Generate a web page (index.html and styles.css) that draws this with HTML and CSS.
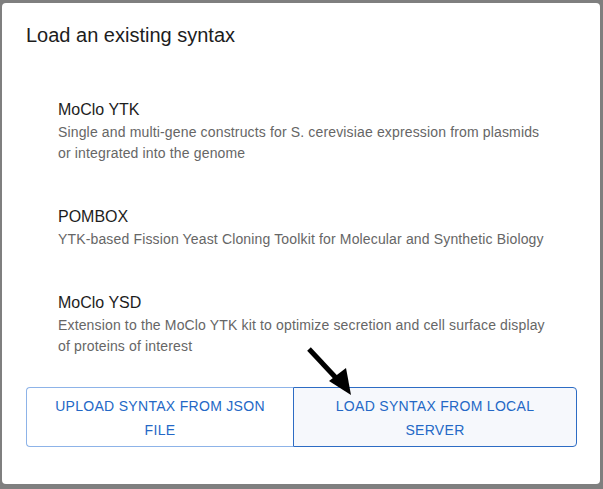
FILE: index.html
```html
<!DOCTYPE html>
<html lang="en">

<head>

    <meta charset="UTF-8">
    <meta name="viewport" content="width=device-width, initial-scale=1.0">
    <title>Load syntax</title>

    <link rel="stylesheet" href="styles.css">

</head>

<body>

    <div class="dialog">

        <h2 class="dialog-title">Load an existing syntax</h2>

        <ul class="syntax-list">

            <li class="syntax-item">
                <div class="syntax-name">MoClo YTK</div>
                <div class="syntax-desc">Single and multi-gene constructs for S. cerevisiae expression from plasmids or integrated into the genome</div>
            </li>

            <li class="syntax-item">
                <div class="syntax-name">POMBOX</div>
                <div class="syntax-desc">YTK-based Fission Yeast Cloning Toolkit for Molecular and Synthetic Biology</div>
            </li>

            <li class="syntax-item">
                <div class="syntax-name">MoClo YSD</div>
                <div class="syntax-desc">Extension to the MoClo YTK kit to optimize secretion and cell surface display of proteins of interest</div>
            </li>

        </ul>

        <div class="button-group">
            <button class="btn-upload">Upload syntax from JSON file</button>
            <button class="btn-local">Load syntax from local server</button>

            <svg class="arrow" width="50" height="52" viewBox="0 0 50 52">
                <line x1="2" y1="2" x2="30" y2="32" stroke="#000" stroke-width="5" />
                <polygon points="22,34 39,21 44,48" fill="#000" />
            </svg>
        </div>

    </div>

</body>

</html>
```

FILE: styles.css
```css
body {
    margin: 0;
    background-color: #7f7f7f;
    font-family: "Liberation Sans", Arial, sans-serif;
    width: 603px;
    height: 489px;
    overflow: hidden;
}

.dialog {
    margin: 3px 0 0 2px;
    width: 598px;
    height: 481px;
    background-color: #fff;
    border-radius: 4px;
    box-sizing: border-box;
    padding: 16px 23px 0 24px;
}

.dialog-title {
    margin: 0;
    font-size: 20px;
    font-weight: normal;
    line-height: 32px;
    color: #1d1d1d;
}

.syntax-list {
    list-style: none;
    margin: 0;
    padding: 26px 0 0 32px;
}

.syntax-item {
    padding: 21px 0 20px 0;
}

.syntax-name {
    font-size: 16px;
    line-height: 24px;
    color: #1d1d1d;
}

.syntax-desc {
    font-size: 14px;
    line-height: 21px;
    letter-spacing: 0.15px;
    color: #666;
    width: 490px;
}

.button-group {
    position: relative;
    display: flex;
    margin-top: 10px;
}

.button-group button {
    height: 60px;
    padding: 6px 20px;
    font-family: "Liberation Sans", Arial, sans-serif;
    font-size: 14px;
    line-height: 24px;
    letter-spacing: 0.3px;
    text-transform: uppercase;
    color: #2468c6;
    background-color: #fff;
    cursor: pointer;
}

.btn-upload {
    width: 267px;
    border: 1px solid #8db3e8;
    border-right: none;
    border-radius: 4px 0 0 4px;
}

.btn-local {
    width: 284px;
    border: 1px solid #2d6cc4;
    border-radius: 0 4px 4px 0;
    background-color: #f6f8fc !important;
}

.arrow {
    position: absolute;
    left: 281px;
    top: -40px;
}
```
